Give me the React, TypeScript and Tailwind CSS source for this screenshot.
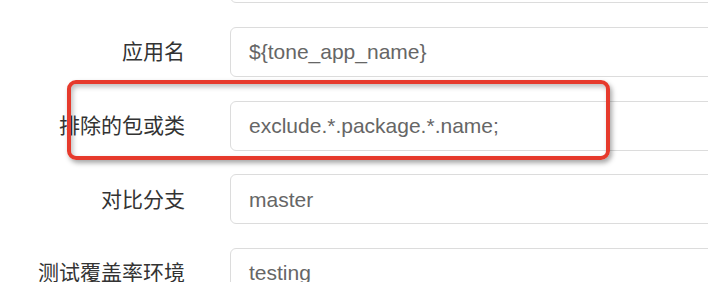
import React from 'react';

const rows = [
  { label: '', value: '' },
  { label: '应用名', value: '${tone_app_name}' },
  { label: '排除的包或类', value: 'exclude.*.package.*.name;' },
  { label: '对比分支', value: 'master' },
  { label: '测试覆盖率环境', value: 'testing' },
];

const App: React.FC = () => {
  return (
    <div
      className="relative w-[708px] h-[282px] overflow-hidden bg-white"
      style={{ fontFamily: '"Liberation Sans", "Noto Sans CJK SC", sans-serif' }}
    >
      <div className="flex flex-col gap-[23.8px] -mt-[47px]">
        {rows.map((row, i) => (
          <div key={i} className="flex items-center">
            <label className="w-[185px] shrink-0 text-right text-[21px] text-[#333333] whitespace-nowrap">
              {row.label}
            </label>
            <div className="ml-[45px] w-[540px] shrink-0 h-[50px] flex items-center rounded-[6px] border border-[#dcdcdc] bg-white pl-[18px] text-[21px] text-[#666666]">
              {row.value}
            </div>
          </div>
        ))}
      </div>

      {/* annotation box */}
      <div className="absolute left-[67px] top-[80px] w-[543px] h-[80px] rounded-[9px] border-[4.5px] border-[#e63a2c] shadow-[2px_3px_5px_rgba(0,0,0,0.35),inset_2px_3px_5px_rgba(0,0,0,0.25)]" />
    </div>
  );
};

export default App;
